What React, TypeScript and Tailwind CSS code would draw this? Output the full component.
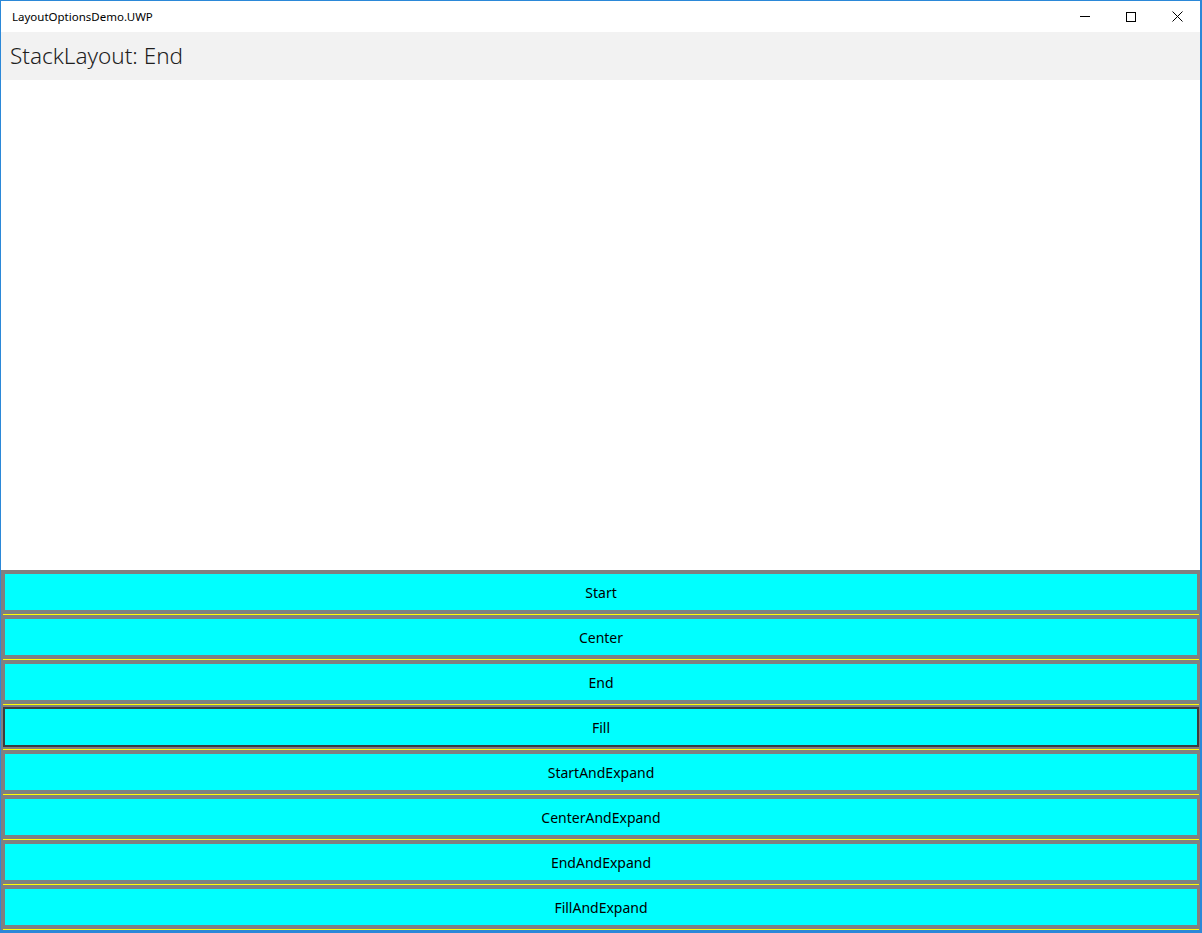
import React from "react";

const items = [
  "Start",
  "Center",
  "End",
  "Fill",
  "StartAndExpand",
  "CenterAndExpand",
  "EndAndExpand",
  "FillAndExpand",
];

export default function App() {
  return (
    <div
      className="w-[1202px] h-[933px] flex flex-col bg-white border-l border-t border-r-2 border-b-[3px] border-[#2b88d8] overflow-hidden"
      style={{ fontFamily: '"Segoe UI", "Noto Sans", "Open Sans", sans-serif' }}
    >
      {/* Title bar */}
      <div className="h-[31px] flex items-center bg-white shrink-0">
        <div className="pl-[11px] text-[11.5px] text-black leading-none">LayoutOptionsDemo.UWP</div>
        <div className="ml-auto flex h-full">
          <div className="w-[46px] h-full flex items-center justify-center">
            <div className="w-[10px] h-px bg-black" />
          </div>
          <div className="w-[46px] h-full flex items-center justify-center">
            <div className="w-[10px] h-[10px] border border-black" />
          </div>
          <div className="w-[46px] h-full flex items-center justify-center">
            <svg width="11" height="11" viewBox="0 0 11 11">
              <path d="M0.5 0.5 L10.5 10.5 M10.5 0.5 L0.5 10.5" stroke="#000" strokeWidth="1" />
            </svg>
          </div>
        </div>
      </div>
      {/* Header */}
      <div className="h-[48px] bg-[#f2f2f2] flex items-center pl-[9px] shrink-0">
        <span className="text-[22.5px] font-light text-[#1f1f1f]">StackLayout: End</span>
      </div>
      {/* Empty area */}
      <div className="flex-1 bg-white" />
      {/* Stack */}
      <div className="bg-[#808080] pl-[2px] pr-[1px] flex flex-col shrink-0">
        {items.map((t) => (
          <div key={t} className="flex flex-col">
            <div className="h-[2px]" />
            <div
              className={
                t === "Fill"
                  ? "h-[40px] bg-[#00ffff] border-2 border-[#3c3c3c] flex items-center justify-center text-[14px] text-black"
                  : "h-[40px] bg-[#00ffff] border-2 border-[#808080] flex items-center justify-center text-[14px] text-black"
              }
            >
              {t}
            </div>
            <div className="h-[2px]" />
            <div className="h-px bg-[#ffff00]" />
          </div>
        ))}
      </div>
    </div>
  );
}
